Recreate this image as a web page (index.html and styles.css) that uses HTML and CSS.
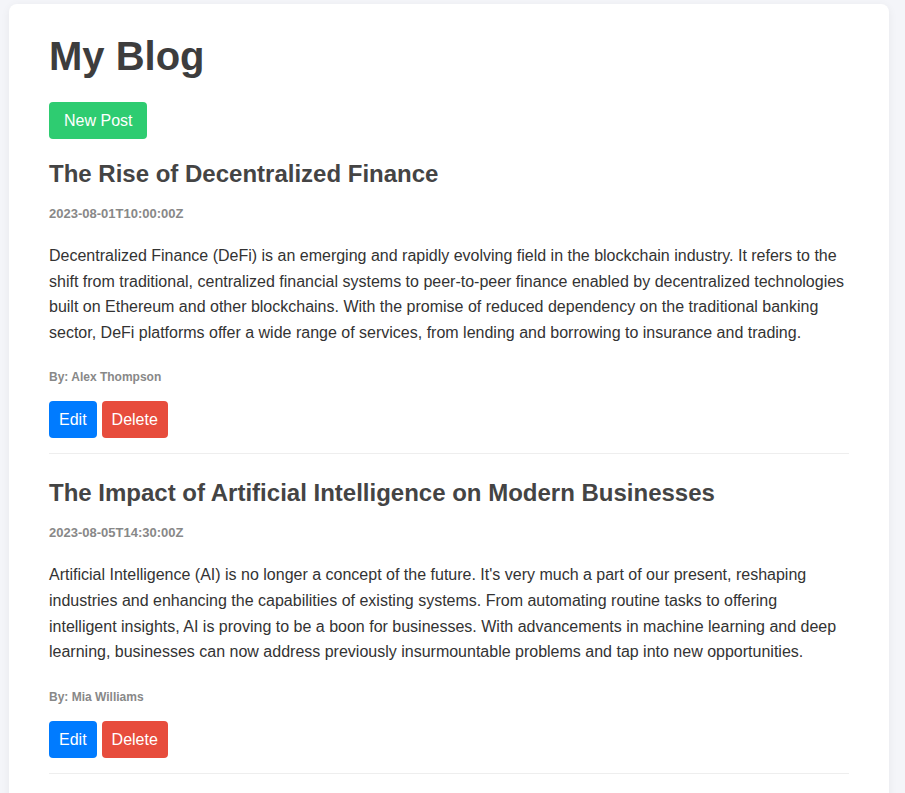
FILE: index.html
```html
<!DOCTYPE html>
<html lang="en">
<head>
<meta charset="utf-8">
<title>My Blog</title>
<link rel="stylesheet" href="styles.css">
</head>
<body>
<div class="page">
  <main class="card">
    <h1 class="site-title">My Blog</h1>
    <button class="btn btn-green">New Post</button>

    <article class="post">
      <h2 class="post-title">The Rise of Decentralized Finance</h2>
      <p class="post-date">2023-08-01T10:00:00Z</p>
      <p class="post-content">Decentralized Finance (DeFi) is an emerging and rapidly evolving field in the blockchain industry. It refers to the shift from traditional, centralized financial systems to peer-to-peer finance enabled by decentralized technologies built on Ethereum and other blockchains. With the promise of reduced dependency on the traditional banking sector, DeFi platforms offer a wide range of services, from lending and borrowing to insurance and trading.</p>
      <p class="post-author">By: Alex Thompson</p>
      <div class="actions">
        <button class="btn btn-blue">Edit</button>
        <button class="btn btn-red">Delete</button>
      </div>
    </article>

    <article class="post">
      <h2 class="post-title">The Impact of Artificial Intelligence on Modern Businesses</h2>
      <p class="post-date">2023-08-05T14:30:00Z</p>
      <p class="post-content">Artificial Intelligence (AI) is no longer a concept of the future. It's very much a part of our present, reshaping industries and enhancing the capabilities of existing systems. From automating routine tasks to offering intelligent insights, AI is proving to be a boon for businesses. With advancements in machine learning and deep learning, businesses can now address previously insurmountable problems and tap into new opportunities.</p>
      <p class="post-author">By: Mia Williams</p>
      <div class="actions">
        <button class="btn btn-blue">Edit</button>
        <button class="btn btn-red">Delete</button>
      </div>
    </article>
  </main>
</div>
</body>
</html>
```

FILE: styles.css
```css
html, body {
  margin: 0;
  padding: 0;
  background: #f4f5f9;
  font-family: "Liberation Sans", Arial, Helvetica, sans-serif;
  color: #333;
}

.page {
  padding: 4px 16px 20px 9px;
}

.card {
  background: #fff;
  border-radius: 8px;
  box-shadow: 0 2px 10px rgba(0, 0, 0, 0.06);
  padding: 29px 40px 40px;
}

.site-title {
  margin: 0 0 23px;
  font-size: 40px;
  line-height: 46px;
  font-weight: bold;
  color: #3d3d3d;
}

.btn {
  display: inline-block;
  border: none;
  border-radius: 4px;
  color: #fff;
  font-family: inherit;
  font-size: 16px;
  line-height: 19px;
  padding: 9px 10px;
  cursor: pointer;
}

.btn-green {
  background: #2ecc71;
  padding: 9px 15px;
  margin-bottom: 21px;
}

.btn-blue {
  background: #007bff;
}

.btn-red {
  background: #e74c3c;
}

.post {
  padding-bottom: 15px;
  border-bottom: 1px solid #eee;
  margin-bottom: 25px;
}

.post-title {
  margin: 0 0 18px;
  font-size: 24px;
  line-height: 28px;
  font-weight: bold;
  color: #444;
}

.post-date {
  margin: 0 0 22px;
  font-size: 13px;
  line-height: 15px;
  font-weight: bold;
  color: #888;
}

.post-content {
  margin: 0 0 25px;
  font-size: 16px;
  line-height: 25.6px;
  color: #333;
}

.post-author {
  margin: 0 0 17px;
  font-size: 12px;
  line-height: 14px;
  font-weight: bold;
  color: #888;
}

.actions {
  display: flex;
  gap: 5px;
}
```
